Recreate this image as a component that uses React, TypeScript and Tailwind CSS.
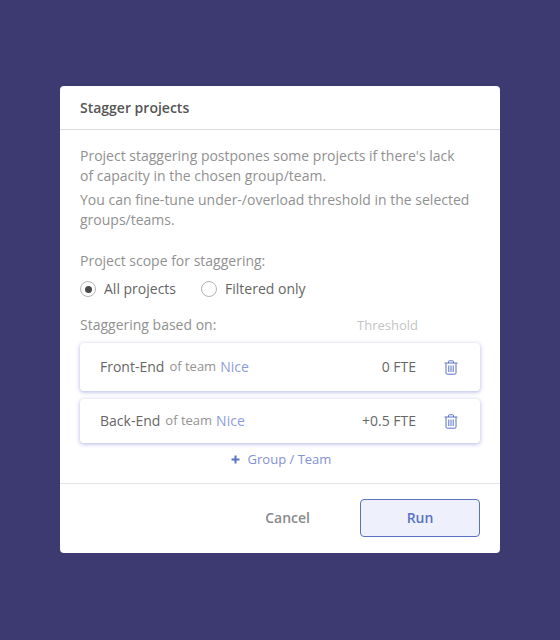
import React, { useState } from 'react';

const TrashIcon: React.FC = () => (
  <svg width="14" height="15" viewBox="0 0 14 15" fill="none" stroke="#5a72c4" strokeWidth="1">
    <path d="M0.5 3h13" />
    <path d="M4.5 3V1.5a.7.7 0 0 1 .7-.7h3.6a.7.7 0 0 1 .7.7V3" />
    <path d="M2 3v10a1.2 1.2 0 0 0 1.2 1.2h7.6a1.2 1.2 0 0 0 1.2-1.2V3" />
    <path d="M4.8 5.5v6.5M7 5.5v6.5M9.2 5.5v6.5" />
  </svg>
);

const PlusIcon: React.FC = () => (
  <svg width="9" height="9" viewBox="0 0 9 9" fill="none" stroke="#5a72c4" strokeWidth="2">
    <path d="M4.5 0.5v8M0.5 4.5h8" />
  </svg>
);

const Radio: React.FC<{ label: string; checked: boolean; onClick: () => void }> = ({ label, checked, onClick }) => (
  <label className="flex items-center gap-2 cursor-pointer" onClick={onClick}>
    <span className="w-4 h-4 rounded-full border border-[#b4b4b4] flex items-center justify-center bg-white">
      {checked && <span className="w-[7px] h-[7px] rounded-full bg-[#4a4a4a]"></span>}
    </span>
    <span className="text-sm leading-5 text-[#666666]">{label}</span>
  </label>
);

const TeamRow: React.FC<{ name: string; value: string; height: string }> = ({ name, value, height }) => (
  <div className={`${height} pl-5 pr-[22px] flex items-center rounded bg-white shadow-[0_1px_4px_rgba(80,90,200,0.45)]`}>
    <span className="text-sm text-[#666666]">{name}</span>
    <span className="text-[13px] text-[#929292] ml-[5px]">of team</span>
    <span className="text-sm text-[#8f9bdc] ml-1">Nice</span>
    <span className="ml-auto text-sm text-[#666666]">{value}</span>
    <span className="ml-[28px] flex items-center"><TrashIcon /></span>
  </div>
);

const App: React.FC = () => {
  const [scope, setScope] = useState('all');

  return (
    <div className="min-h-screen bg-[#3c3a70] pt-[86px] px-[60px] font-['Open_Sans',sans-serif]">
      <div className="w-[440px] h-[467px] bg-white rounded flex flex-col">
        <div className="h-[44px] px-5 flex items-center border-b border-[#dcdcdc]">
          <h2 className="text-sm font-semibold text-[#555555]">Stagger projects</h2>
        </div>

        <div className="px-5 pt-4 flex-1">
          <p className="text-sm leading-5 text-[#919191]">
            Project staggering postpones some projects if there's lack<br />of capacity in the chosen group/team.
          </p>
          <p className="text-sm leading-5 text-[#919191] mt-1">
            You can fine-tune under-/overload threshold in the selected<br />groups/teams.
          </p>

          <p className="text-sm leading-5 text-[#919191] mt-[21px]">Project scope for staggering:</p>
          <div className="flex gap-[25px] mt-[8px]">
            <Radio label="All projects" checked={scope === 'all'} onClick={() => setScope('all')} />
            <Radio label="Filtered only" checked={scope === 'filtered'} onClick={() => setScope('filtered')} />
          </div>

          <div className="flex justify-between mt-4 pr-[62px] items-center">
            <span className="text-sm leading-5 text-[#919191]">Staggering based on:</span>
            <span className="text-[13px] leading-5 text-[#c4c4c4]">Threshold</span>
          </div>

          <div className="flex flex-col gap-2 mt-2">
            <TeamRow name="Front-End" value="0 FTE" height="h-[48px]" />
            <TeamRow name="Back-End" value="+0.5 FTE" height="h-[44px]" />
          </div>

          <button className="flex items-center justify-center gap-[8px] w-full mt-[6px] pl-[2px] text-[13px] leading-5 text-[#8391d6]">
            <PlusIcon />
            Group / Team
          </button>
        </div>

        <div className="h-[70px] px-5 pt-[15px] flex items-start justify-end border-t border-[#e2e2e2]">
          <button className="h-[38px] text-sm font-semibold text-[#8a8a8a] mr-[50px]">Cancel</button>
          <button className="w-[120px] h-[38px] rounded border border-[#5a72c4] bg-[#eef1fb] text-sm font-semibold text-[#5a72c4]">Run</button>
        </div>
      </div>
    </div>
  );
};

export default App;
